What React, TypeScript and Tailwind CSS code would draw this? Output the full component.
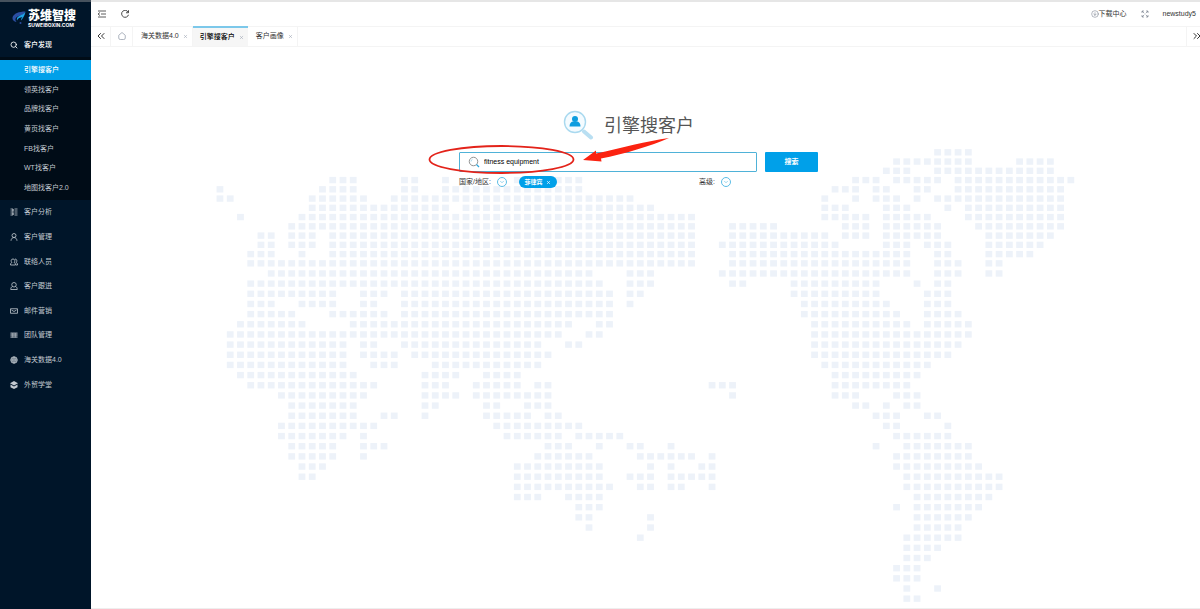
import { useState } from 'react';
import type { ReactNode } from 'react';
import { ChevronDown, ChevronsLeft, ChevronsRight, CircleArrowDown, Search, X } from 'lucide-react';

// dotted world map: filled column ranges for every row, top to bottom
const MAP_ROWS = [
  '70-73',
  '66-73 78-81',
  '65-67 70-81',
  '11-13 18-19 22 29 33-35 62-64 66-70 72-83',
  '0 10-13 18-19 22-35 60-62 64-65 68-69 72-82',
  '0-1 9-14 17-40 59 62 64-66 68 70-82',
  '9-22 24-42 59-61 65-67 71 73-82',
  '2 8-46 59-63 65-69 73-82',
  '7-46 50-54 61-63 65-70 74-82',
  '4-5 7-9 11-46 50-59 61-63 65-70 75-81',
  '4-5 7-9 11-46 49-60 65-67 69-71 75-80',
  '3-5 8 11-46 50-67 70-71 75-79',
  '3-46 50-67 70-72 75-76',
  '5-36 40-42 49-67 70-72 75-76',
  '3-37 40-42 50-51 56-64 68 70-71',
  '3-11 14-16 18-38 40-41 56-64 69-71',
  '3-5 8-11 14-15 18-38 40 57-65 69-71',
  '3-7 11-16 18-38 57-66 69-72',
  '2-8 13-34 37-38 58-67 69-73',
  '1-33 36-37 58-73',
  '1-12 14-15 18-31 34-35 58-72',
  '1-12 14-17 19-32 58-71',
  '1-12 15-17 21-31 59-69',
  '2-13 20-23 26-29 60-68',
  '3-15 20-22 25-29 31-32 48-50 60-67',
  '6-14 20-23 25-32 50 60-62 66-68',
  '7-13 20-21 26-27 30-32 62-63 65 67-68',
  '7-13 16-17 20 26-30 32-33 64-66 69-70',
  '6-15 27-35 65-66 71',
  '6-12 14 28-33 35-39 66-71',
  '7-11 14-16 32-34 37 40-41 44 64 67-73',
  '7-11 14 31-36 41-46 48 66-73',
  '8-10 29-37 42 44 47-48 66-74',
  '8-9 29-37 40-42 44-48 67-76',
  '29-38 41-42 44-45 48 67-76',
  '29-31 34-37 68-75',
  '35-37 66 68-74',
  '35-36 42 68-73',
  '36 42 68-72',
  '41 67-72',
  '67-70',
  '67-69',
  '66-68',
  '66-68',
  '67 70',
  '67-68',
];

// the northern rows sit a little closer together
const rowY = (row: number) => (row <= 12 ? 105.5 + row * 9.27 : 216.7 + (row - 12) * 10.18);

const mapDots = MAP_ROWS.flatMap((ranges, row) =>
  ranges.split(' ').flatMap((range) => {
    const [from, to = from] = range.split('-').map(Number);
    return Array.from({ length: to - from + 1 }, (_, i) => ({
      x: 128.2 + (from + i) * 10.27 - 3.4,
      y: rowY(row) - 3.2,
    }));
  })
);

function WorldMap() {
  return (
    <svg className="absolute inset-0 h-full w-full" viewBox="0 0 1109 562" aria-hidden="true">
      {mapDots.map((dot) => (
        <rect key={`${dot.x}-${dot.y}`} x={dot.x} y={dot.y} width="6.8" height="6.4" fill="#edf2f9" />
      ))}
    </svg>
  );
}

function Icon({ children }: { children: ReactNode }) {
  return (
    <svg
      className="size-2 shrink-0"
      viewBox="0 0 16 16"
      fill="none"
      stroke="currentColor"
      strokeWidth="1.6"
      aria-hidden="true"
    >
      {children}
    </svg>
  );
}

const SUB_ITEMS = ['引擎搜客户', '领英找客户', '品牌找客户', '黄页找客户', 'FB找客户', 'WT找客户', '地图找客户2.0'];

const MENU_ITEMS = [
  { label: '客户分析', icon: <path d="M1 2h5v4H1M1 14h5v-4H1M6 2v12M9 2h6M9 6h6M9 10h6M9 14h6" /> },
  { label: '客户管理', icon: <path d="M8 1a4 4 0 1 1 0 8 4 4 0 0 1 0-8M2 15.5C2.300 11 5 9 8 9s5.700 2 6 6.500" /> },
  { label: '联络人员', icon: <path d="M6 2a3.500 3.500 0 0 1 2 6.500c2 1 3 2.500 3 5.500H1c0-3 1-4.500 3-5.500A3.500 3.500 0 0 1 6 2M10 2a3.500 3.500 0 0 1 2 6.500c2 1 3 2.500 3 5.500h-3" /> },
  { label: '客户跟进', icon: <path d="M8 1a4.500 4.500 0 1 1 0 9 4.500 4.500 0 0 1 0-9M5 9c-2.500 1-3.500 3-3.500 6h13c0-3-1-5-3.500-6" /> },
  { label: '邮件营销', icon: <path d="M1 3.500h14v9H1zM3 6l5 3 5-3" /> },
  {
    label: '团队管理',
    icon: (
      <>
        <path d="M1 3.500h14v9.500H1z" fill="currentColor" fillOpacity="0.4" stroke="none" />
        <path d="M1 4h14M1 8h14M1 12.500h14M5.500 4v9M10.500 4v9" strokeWidth="1.200" />
      </>
    ),
  },
  {
    label: '海关数据4.0',
    icon: (
      <>
        <circle cx="8" cy="8" r="6.500" fill="currentColor" fillOpacity="0.5" />
        <path d="M1.500 8h13M8 1.500v13M8 1.500c-4 4-4 9 0 13M8 1.500c4 4 4 9 0 13" strokeWidth="1" />
      </>
    ),
  },
  {
    label: '外贸学堂',
    icon: (
      <>
        <path d="M8 0l8 4.500L8 9 0 4.500z" fill="currentColor" stroke="none" />
        <path d="M1 7v5.500L8 16l7-3.500V7l-7 4z" fill="currentColor" stroke="none" />
      </>
    ),
  },
];

function Sidebar() {
  const [active, setActive] = useState(SUB_ITEMS[0]);

  return (
    <aside className="w-[91px] shrink-0 bg-[#001529] text-[#c3cad1]">
      <div className="h-[2px] bg-[#46525e]" />
      <a href="#" className="flex h-[31px] items-center gap-[2px] pl-3 text-white">
        <svg className="h-4 w-[14px] shrink-0" viewBox="0 0 28 32" aria-hidden="true">
          <path d="M27 3C14 3 3 7 1 15c-1 5 3 8 8 9-4-5-2-10 5-12l9-3z" fill="#2c4fa3" />
          <path d="M27 4c-4 5-8 5-14 9-3 2-4 5-3 8 2-5 6-6 11-7-2 2-3 4-3 7 4-5 7-9 9-17z" fill="#1fa3e6" />
          <circle cx="17" cy="26" r="2" fill="#2c4fa3" />
        </svg>
        <span className="flex flex-col pt-[2px]">
          <span className="text-[12px] leading-[12px] font-black">苏维智搜</span>
          <span className="font-['Inter','Liberation_Sans',sans-serif] text-[5px] leading-[6px] font-bold">
            SUWEIBOXIN.COM
          </span>
        </span>
      </a>
      <nav className="text-[7px] leading-[10px]">
        <a href="#" className="flex h-6 items-center gap-[6px] pl-[10px] font-medium text-white">
          <Search className="size-2" strokeWidth={2.5} />
          客户发现
        </a>
        <ul className="flex h-[143px] flex-col bg-[#000c17] pt-[3px] pb-[2px]">
          {SUB_ITEMS.map((item) => (
            <li key={item} className="flex flex-1">
              <a
                href="#"
                onClick={() => setActive(item)}
                className={
                  item === active
                    ? 'flex flex-1 items-center bg-[#00a0e9] pl-6 font-medium text-white'
                    : 'flex flex-1 items-center pl-6'
                }
              >
                {item}
              </a>
            </li>
          ))}
        </ul>
        <ul className="flex h-[197px] flex-col">
          {MENU_ITEMS.map((item) => (
            <li key={item.label} className="flex flex-1">
              <a href="#" className="flex flex-1 items-center gap-[6px] pl-[10px]">
                <Icon>{item.icon}</Icon>
                {item.label}
              </a>
            </li>
          ))}
        </ul>
      </nav>
    </aside>
  );
}

function TopBar() {
  return (
    <header className="flex h-6 items-center justify-between pr-1 pl-[7px] text-[7px] leading-[10px]">
      <div className="flex items-center gap-[15px]">
        <button type="button" aria-label="收起菜单">
          <Icon>
            <path d="M0 2h16M6 8h10M0 14h16M4 5L0 8l4 3" />
          </Icon>
        </button>
        <button type="button" aria-label="刷新">
          <Icon>
            <path d="M14.500 4.500A7 7 0 1 0 15 9.500M15 .500v5h-5" strokeWidth="1.800" />
          </Icon>
        </button>
      </div>
      <div className="flex items-center">
        <a href="#" className="flex items-center">
          <CircleArrowDown className="size-2 text-gray-500" strokeWidth={1.5} />
          下载中心
        </a>
        <button type="button" aria-label="全屏" className="mx-[14px] text-gray-500">
          <Icon>
            <path d="M2 6V2h4M2 2l4.500 4.500M10 2h4v4M14 2L9.500 6.500M2 10v4h4M2 14l4.500-4.500M14 10v4h-4M14 14L9.500 9.500" strokeWidth="1.200" />
          </Icon>
        </button>
        <a href="#">newstudy5</a>
      </div>
    </header>
  );
}

const TABS = ['海关数据4.0', '引擎搜客户', '客户画像'];

function TabBar() {
  const [current, setCurrent] = useState('引擎搜客户');

  return (
    <div className="flex h-[21px] overflow-hidden border-b border-[#f4f4f4] text-[7px] leading-[10px] shadow-[inset_0_1px_0_#f4f4f4]">
      <button type="button" aria-label="向左滚动" className="flex w-5 items-center justify-center border-r border-[#f4f4f4]">
        <ChevronsLeft className="size-3 shrink-0" strokeWidth={2} />
      </button>
      <button type="button" aria-label="首页" className="flex w-[22px] items-center justify-center border-r border-[#f4f4f4] text-gray-400">
        <Icon>
          <path d="M8 1l6.500 5.500V12a3 3 0 0 1-3 3h-7a3 3 0 0 1-3-3V6.500z" />
        </Icon>
      </button>
      {TABS.map((tab) => (
        <div
          key={tab}
          className={
            tab === current
              ? 'flex items-center gap-1 border-t-2 border-[#7cc8ea] bg-[#f6f6f6] pr-1 pl-[7px] font-medium text-black'
              : 'flex items-center gap-1 border-r border-[#f4f4f4] pr-1 pl-2'
          }
        >
          <button type="button" onClick={() => setCurrent(tab)}>
            {tab}
          </button>
          <button type="button" aria-label={`关闭${tab}`} className="text-gray-400">
            <X className="size-[5px]" strokeWidth={2.5} />
          </button>
        </div>
      ))}
      <button type="button" aria-label="向右滚动" className="ml-auto flex w-[14px] items-center border-l border-[#f4f4f4] pl-1">
        <ChevronsRight className="size-3 shrink-0" strokeWidth={2} />
      </button>
    </div>
  );
}

function MoreButton({ label }: { label: string }) {
  return (
    <button
      type="button"
      aria-label={label}
      className="flex size-[10px] items-center justify-center rounded-full border border-[#5cbde6] bg-white text-[#5cbde6]"
    >
      <ChevronDown className="size-[6px]" strokeWidth={2.5} />
    </button>
  );
}

function SearchPanel() {
  const [keyword, setKeyword] = useState('fitness equipment');
  const [country, setCountry] = useState('菲律宾');

  return (
    <div className="relative mx-auto w-[359px]">
      <div className="flex h-[30px] items-center gap-[9px] pl-[104px]">
        <svg className="h-[30px] w-8" viewBox="0 0 32 30" aria-hidden="true">
          <path d="M21 21.500l7 6" stroke="#b9dff2" strokeWidth="4" strokeLinecap="round" />
          <circle cx="12" cy="12" r="10.500" fill="#f4fbff" stroke="#a9d9ef" strokeWidth="1.400" />
          <circle cx="12" cy="9" r="3" fill="#0d9ddf" />
          <path d="M6.500 16.500c0-3.500 2-5 3.500-5h4c1.500 0 3.500 1.500 3.500 5z" fill="#0d9ddf" />
        </svg>
        <h1 className="pt-[2px] text-[18px] leading-6 text-[#555]">引擎搜客户</h1>
      </div>
      <form className="mt-3 flex h-5 gap-2" onSubmit={(e) => e.preventDefault()}>
        <label className="flex flex-1 items-center gap-1 rounded-[1px] border border-[#4fb2d8] bg-white pl-2">
          <svg className="size-3 shrink-0" viewBox="0 0 24 24" fill="none" stroke="#888" strokeWidth="1.800" aria-hidden="true">
            <circle cx="11" cy="11" r="8.500" />
            <path d="M17 17l5 5" stroke="#2aa7de" strokeWidth="2.500" />
            <path d="M6 11a5 5 0 0 1 3-4.500" stroke="#9fd3ea" />
          </svg>
          <input
            type="text"
            aria-label="关键词"
            value={keyword}
            onChange={(e) => setKeyword(e.target.value)}
            className="w-full bg-transparent text-[7px] leading-[10px] text-black outline-none"
          />
        </label>
        <button type="submit" className="w-[53px] rounded-[1px] bg-[#00a0e9] text-[7px] leading-[10px] font-bold text-white">
          搜索
        </button>
      </form>
      <div className="mt-1 flex h-3 items-center text-[7px] leading-[10px]">
        <span className="mr-[6px]">国家/地区:</span>
        <MoreButton label="选择国家/地区" />
        <div className="ml-3 w-[38px]">
          {country && (
            <span className="flex h-3 items-center justify-center gap-1 rounded-full bg-[#00a0e9] text-[6px] font-bold text-white">
              {country}
              <button type="button" aria-label="移除国家" onClick={() => setCountry('')}>
                <X className="size-[5px]" strokeWidth={3} />
              </button>
            </span>
          )}
        </div>
        <span className="mr-[6px] ml-[142px]">高级:</span>
        <MoreButton label="高级选项" />
      </div>
      {/* hand-drawn marker around the keyword */}
      <svg
        className="pointer-events-none absolute top-[26px] -left-8 h-10 w-[244px]"
        viewBox="0 0 244 40"
        aria-hidden="true"
      >
        <ellipse cx="74.500" cy="23.500" rx="72" ry="13.500" fill="none" stroke="#e3231a" strokeWidth="1.800" />
        <path d="M156 24l13-9.500v3C194 12 220 5 242 2c-18 8-45 16-68 20.500l.5 3z" fill="#fb2311" />
      </svg>
    </div>
  );
}

export default function App() {
  return (
    <div className="flex min-h-screen bg-white font-['Liberation_Sans','Noto_Sans_CJK_SC',sans-serif] text-[#333]">
      <Sidebar />
      <div className="flex min-w-0 flex-1 flex-col">
        <div className="h-[2px] bg-[#e6e6e6]" />
        <TopBar />
        <TabBar />
        <main className="relative flex-1 border-b border-[#eee] pt-[63px] pr-[14px]">
          <WorldMap />
          <SearchPanel />
        </main>
      </div>
    </div>
  );
}
